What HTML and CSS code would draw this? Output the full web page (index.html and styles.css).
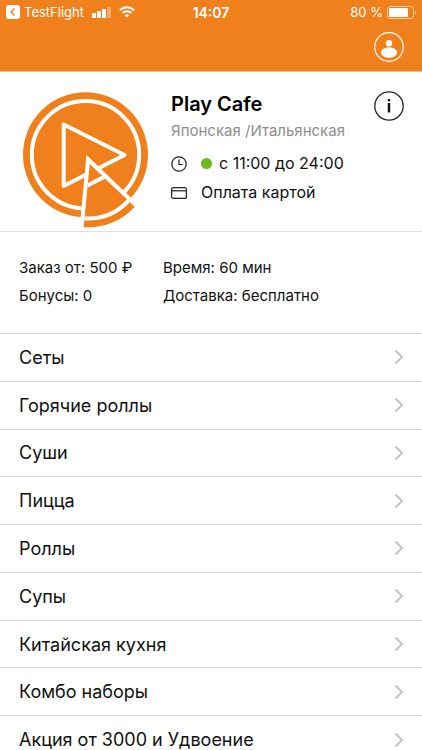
FILE: index.html
```html
<!DOCTYPE html>
<html lang="ru">
<head>
<meta charset="utf-8">
<meta name="viewport" content="width=device-width, initial-scale=1">
<title>Play Cafe</title>
<link rel="stylesheet" href="styles.css">
</head>
<body>
<div class="app">
  <header class="topbar">
    <div class="status">
      <div class="status-left">
        <svg width="14" height="14" viewBox="0 0 14 14" aria-hidden="true"><rect width="14" height="14" rx="3" fill="#fff"/><path d="M8.500 3.500 5 7l3.500 3.500" fill="none" stroke="#ef801b" stroke-width="1.500"/></svg>
        <span class="back-app">TestFlight</span>
        <svg class="signal" width="19" height="11" viewBox="0 0 19 11" fill="#fff" aria-hidden="true"><rect y="6" width="4" height="5" rx="1"/><rect x="5" y="4" width="4" height="7" rx="1"/><rect x="10" y="2" width="4" height="9" rx="1"/><rect x="15" width="4" height="11" rx="1" opacity=".35"/></svg>
        <svg width="16" height="12" viewBox="0 0 16 12" fill="none" stroke="#fff" stroke-width="2" aria-hidden="true"><path d="M1 4.300C5 .2 11 .2 15 4.300M3.600 7c2.500-2.500 6.300-2.500 8.800 0"/><path d="M8 11.600 5.700 9.200c1.300-1.200 3.300-1.200 4.600 0z" fill="#fff" stroke="none"/></svg>
      </div>
      <div class="clock">14:07</div>
      <div class="status-right">
        <span>80 %</span>
        <svg width="29" height="13" viewBox="0 0 29 13" aria-hidden="true"><rect x=".5" y=".5" width="26" height="12" rx="3" fill="none" stroke="#fff" opacity=".6"/><rect x="2" y="2" width="19" height="9" rx="1" fill="#fff"/><path d="M28 4.500c1.200.5 1.200 3.500 0 4z" fill="#fff" opacity=".6"/></svg>
      </div>
    </div>
    <div class="nav">
      <button class="icon-button" type="button" aria-label="Профиль">
        <svg width="30" height="30" viewBox="0 0 30 30"><circle cx="15" cy="15" r="14.300" fill="none" stroke="#fff" stroke-width="1.200"/><circle cx="15" cy="11.300" r="3.200" fill="#fff"/><ellipse cx="15" cy="20.500" rx="8" ry="5.300" fill="#fff"/></svg>
      </button>
    </div>
  </header>

  <section class="cafe">
    <svg class="logo" width="127" height="138" viewBox="0 0 127 138" role="img" aria-label="Play Cafe">
      <defs>
        <clipPath id="slice"><path d="M67.700 73 61.300 140H130v-8z"/></clipPath>
        <g id="pizza">
          <circle cx="63.500" cy="63.800" r="62.500" fill="#ef801b"/>
          <circle cx="63.500" cy="63.800" r="53.700" fill="none" stroke="#fff" stroke-width="4"/>
          <path d="M41.700 33.500v61.500L102.500 64z" fill="none" stroke="#fff" stroke-width="4" stroke-linejoin="round"/>
        </g>
      </defs>
      <use href="#pizza"/>
      <path d="M64.500 64 57.500 138H127v-14z" fill="#fff"/>
      <g clip-path="url(#slice)"><use href="#pizza" x="3" y="10"/></g>
    </svg>
    <div class="cafe-info">
      <h1>Play Cafe</h1>
      <p class="cuisine">Японская /Итальянская</p>
      <p class="detail">
        <svg width="16" height="16" viewBox="0 0 16 16" fill="none" stroke="#222" stroke-width="1.200" aria-hidden="true"><circle cx="8" cy="8" r="7.200"/><path d="M8 3.500v5h3.800"/></svg>
        <span class="hours"><i class="open-dot"></i>с 11:00 до 24:00</span>
      </p>
      <p class="detail">
        <svg width="16" height="16" viewBox="0 0 16 16" fill="none" stroke="#222" stroke-width="1.200" aria-hidden="true"><rect x=".6" y="2.600" width="14.800" height="10.800" rx="2"/><path d="M1 5.800h14"/></svg>
        <span>Оплата картой</span>
      </p>
    </div>
    <button class="icon-button" type="button" aria-label="Информация">
      <svg width="30" height="30" viewBox="0 0 30 30"><circle cx="15" cy="15" r="14.200" fill="none" stroke="#222" stroke-width="1.300"/><path d="M15 12v9.500M15 8v2.300" stroke="#111" stroke-width="2.400"/></svg>
    </button>
  </section>

  <section class="terms">
    <span>Заказ от: 500 ₽</span><span>Время: 60 мин</span>
    <span>Бонусы: 0</span><span>Доставка: бесплатно</span>
  </section>

  <nav class="menu">
    <a href="#sets">Сеты<svg class="chevron" viewBox="0 0 10 16"><path d="m1.500 1.500 6.500 6.500-6.500 6.500"/></svg></a>
    <a href="#hot-rolls">Горячие роллы<svg class="chevron" viewBox="0 0 10 16"><path d="m1.500 1.500 6.500 6.500-6.500 6.500"/></svg></a>
    <a href="#sushi">Суши<svg class="chevron" viewBox="0 0 10 16"><path d="m1.500 1.500 6.500 6.500-6.500 6.500"/></svg></a>
    <a href="#pizza-menu">Пицца<svg class="chevron" viewBox="0 0 10 16"><path d="m1.500 1.500 6.500 6.500-6.500 6.500"/></svg></a>
    <a href="#rolls">Роллы<svg class="chevron" viewBox="0 0 10 16"><path d="m1.500 1.500 6.500 6.500-6.500 6.500"/></svg></a>
    <a href="#soups">Супы<svg class="chevron" viewBox="0 0 10 16"><path d="m1.500 1.500 6.500 6.500-6.500 6.500"/></svg></a>
    <a href="#chinese">Китайская кухня<svg class="chevron" viewBox="0 0 10 16"><path d="m1.500 1.500 6.500 6.500-6.500 6.500"/></svg></a>
    <a href="#combo">Комбо наборы<svg class="chevron" viewBox="0 0 10 16"><path d="m1.500 1.500 6.500 6.500-6.500 6.500"/></svg></a>
    <a href="#promo">Акция от 3000 и Удвоение<svg class="chevron" viewBox="0 0 10 16"><path d="m1.500 1.500 6.500 6.500-6.500 6.500"/></svg></a>
  </nav>
</div>
</body>
</html>
```

FILE: styles.css
```css
* { box-sizing: border-box; }

body {
  margin: 0;
  background: #fff;
  color: #111;
  font-family: Inter, "Noto Sans", sans-serif;
}

h1, p { margin: 0; }

svg { display: block; flex: none; }

.app {
  height: 100vh;
  overflow: hidden;
}

.topbar {
  background: #ef801b;
  color: #fff;
  border-bottom: 1px solid #f7c28f;
}

.status {
  display: grid;
  grid-template-columns: 1fr auto 1fr;
  align-items: center;
  height: 24px;
  padding: 0 6px;
  font-size: 13px;
}

.status-left, .status-right {
  display: flex;
  align-items: center;
  gap: 4px;
}

.status-right { justify-content: flex-end; }

.back-app { margin-right: 4px; }

.signal { margin-right: 4px; }

.clock { font-size: 14px; font-weight: 600; }

.nav {
  display: flex;
  justify-content: flex-end;
  padding: 8px 18px 9px;
}

.icon-button {
  flex: none;
  padding: 0;
  border: 0;
  background: none;
}

.cafe {
  display: flex;
  align-items: flex-start;
  padding: 19px 18px 2px 22px;
  border-bottom: 1px solid #e0e0e0;
}

.cafe-info {
  flex: 1;
  padding-left: 22px;
}

h1 {
  font-size: 20px;
  line-height: 26px;
  font-weight: 600;
  color: #000;
}

.cuisine {
  margin-bottom: 4px;
  font-size: 15px;
  line-height: 28px;
  color: #8e8e8e;
  white-space: nowrap;
}

.detail {
  display: flex;
  align-items: center;
  gap: 14px;
  font-size: 16px;
  line-height: 29px;
  white-space: nowrap;
}

.hours {
  display: flex;
  align-items: center;
  gap: 7px;
}

.open-dot {
  width: 11px;
  height: 11px;
  border-radius: 50%;
  background: #6cb91e;
}

.terms {
  display: grid;
  grid-template-columns: 144px 1fr;
  padding: 22px 19px 23px;
  font-size: 15px;
  line-height: 28px;
}

.menu {
  display: grid;
  grid-auto-rows: 1fr;
  height: 430px;
}

.menu a {
  display: flex;
  align-items: center;
  justify-content: space-between;
  padding: 0 18px 0 19px;
  border-top: 1px solid #dcdcdc;
  color: inherit;
  font-size: 18px;
  text-decoration: none;
}

.chevron {
  width: 10px;
  height: 16px;
  fill: none;
  stroke: #c4c4c8;
  stroke-width: 2;
}
```
